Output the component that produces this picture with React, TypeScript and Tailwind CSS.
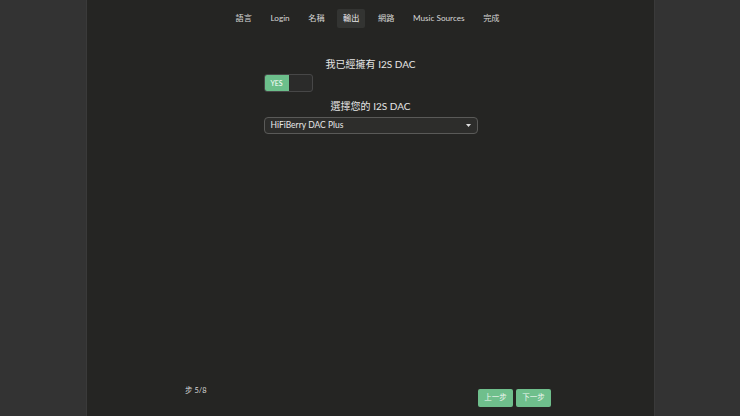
import { useState } from 'react';

const tabs = ['語言', 'Login', '名稱', '輸出', '網路', 'Music Sources', '完成'];

const font = { fontFamily: 'Lato, "Noto Sans CJK TC", sans-serif' };

export default function App() {
  const [active] = useState('輸出');
  const [hasDac, setHasDac] = useState(true);

  return (
    <div
      className="flex h-[416px] w-[740px] overflow-hidden bg-[#333333] text-[#e4e4e4]"
      style={font}
    >
      {/* 左右兩側為灰色留白 */}
      <div className="w-[87px] flex-shrink-0 bg-[#333333] border-r border-[#3a3a3a]" />

      <main className="flex-1 flex flex-col bg-[#252523]">
        {/* 頂部步驟分頁 */}
        <nav className="flex justify-center items-start gap-[6.5px] pt-[9px] pr-[6px] h-[36px]">
          {tabs.map((t) => (
            <div
              key={t}
              className={`h-[19px] px-[6px] flex items-center text-[8.2px] rounded-[2px] whitespace-nowrap ${
                t === active ? 'bg-[#333432] text-[#e8e8e8]' : 'text-[#d6d6d6]'
              }`}
            >
              {t}
            </div>
          ))}
        </nav>

        <section className="w-[214px] mx-auto mt-[21px] flex flex-col">
          <h2 className="text-center text-[10px] leading-[14px] text-[#e6e6e6]">我已經擁有 I2S DAC</h2>

          <button
            type="button"
            onClick={() => setHasDac(!hasDac)}
            className="mt-[3px] w-[49px] h-[18px] flex rounded-[3px] border border-[#474747] bg-[#2b2b2a] overflow-hidden"
          >
            <span
              className={`w-[24px] h-full flex items-center justify-center text-[7px] text-white ${
                hasDac ? 'bg-[#6cbf8b]' : 'bg-transparent'
              }`}
            >
              {hasDac ? 'YES' : ''}
            </span>
          </button>

          <h2 className="mt-[7px] text-center text-[10px] leading-[14px] text-[#e6e6e6]">選擇您的 I2S DAC</h2>

          <div className="mt-[4px] h-[17px] flex items-center justify-between rounded-[4px] border border-[#5a5a58] bg-[#2d2d2b] pl-[6px] pr-[6px]">
            <span className="text-[8.5px] text-[#e8e8e8]">HiFiBerry DAC Plus</span>
            <svg width="5" height="3" viewBox="0 0 5 3">
              <path d="M0 0h5L2.5 3z" fill="#e0e0e0" />
            </svg>
          </div>
        </section>

        {/* 底部：步驟計數 + 上下一步 */}
        <footer className="mt-auto flex justify-between items-start pl-[98px] pr-[103px] pb-[9px]">
          <span className="text-[7.5px] leading-none text-[#d8d8d8] mt-[-2px]">步 5/8</span>
          <div className="flex gap-[3px]">
            <button
              type="button"
              className="w-[35px] h-[18px] rounded-[2px] bg-[#6fbf8c] text-[7.5px] text-[#eef7f1]"
            >
              上一步
            </button>
            <button
              type="button"
              className="w-[35px] h-[18px] rounded-[2px] bg-[#6fbf8c] text-[7.5px] text-[#eef7f1]"
            >
              下一步
            </button>
          </div>
        </footer>
      </main>

      <div className="w-[86px] flex-shrink-0 bg-[#333333] border-l border-[#3a3a3a]" />
    </div>
  );
}
